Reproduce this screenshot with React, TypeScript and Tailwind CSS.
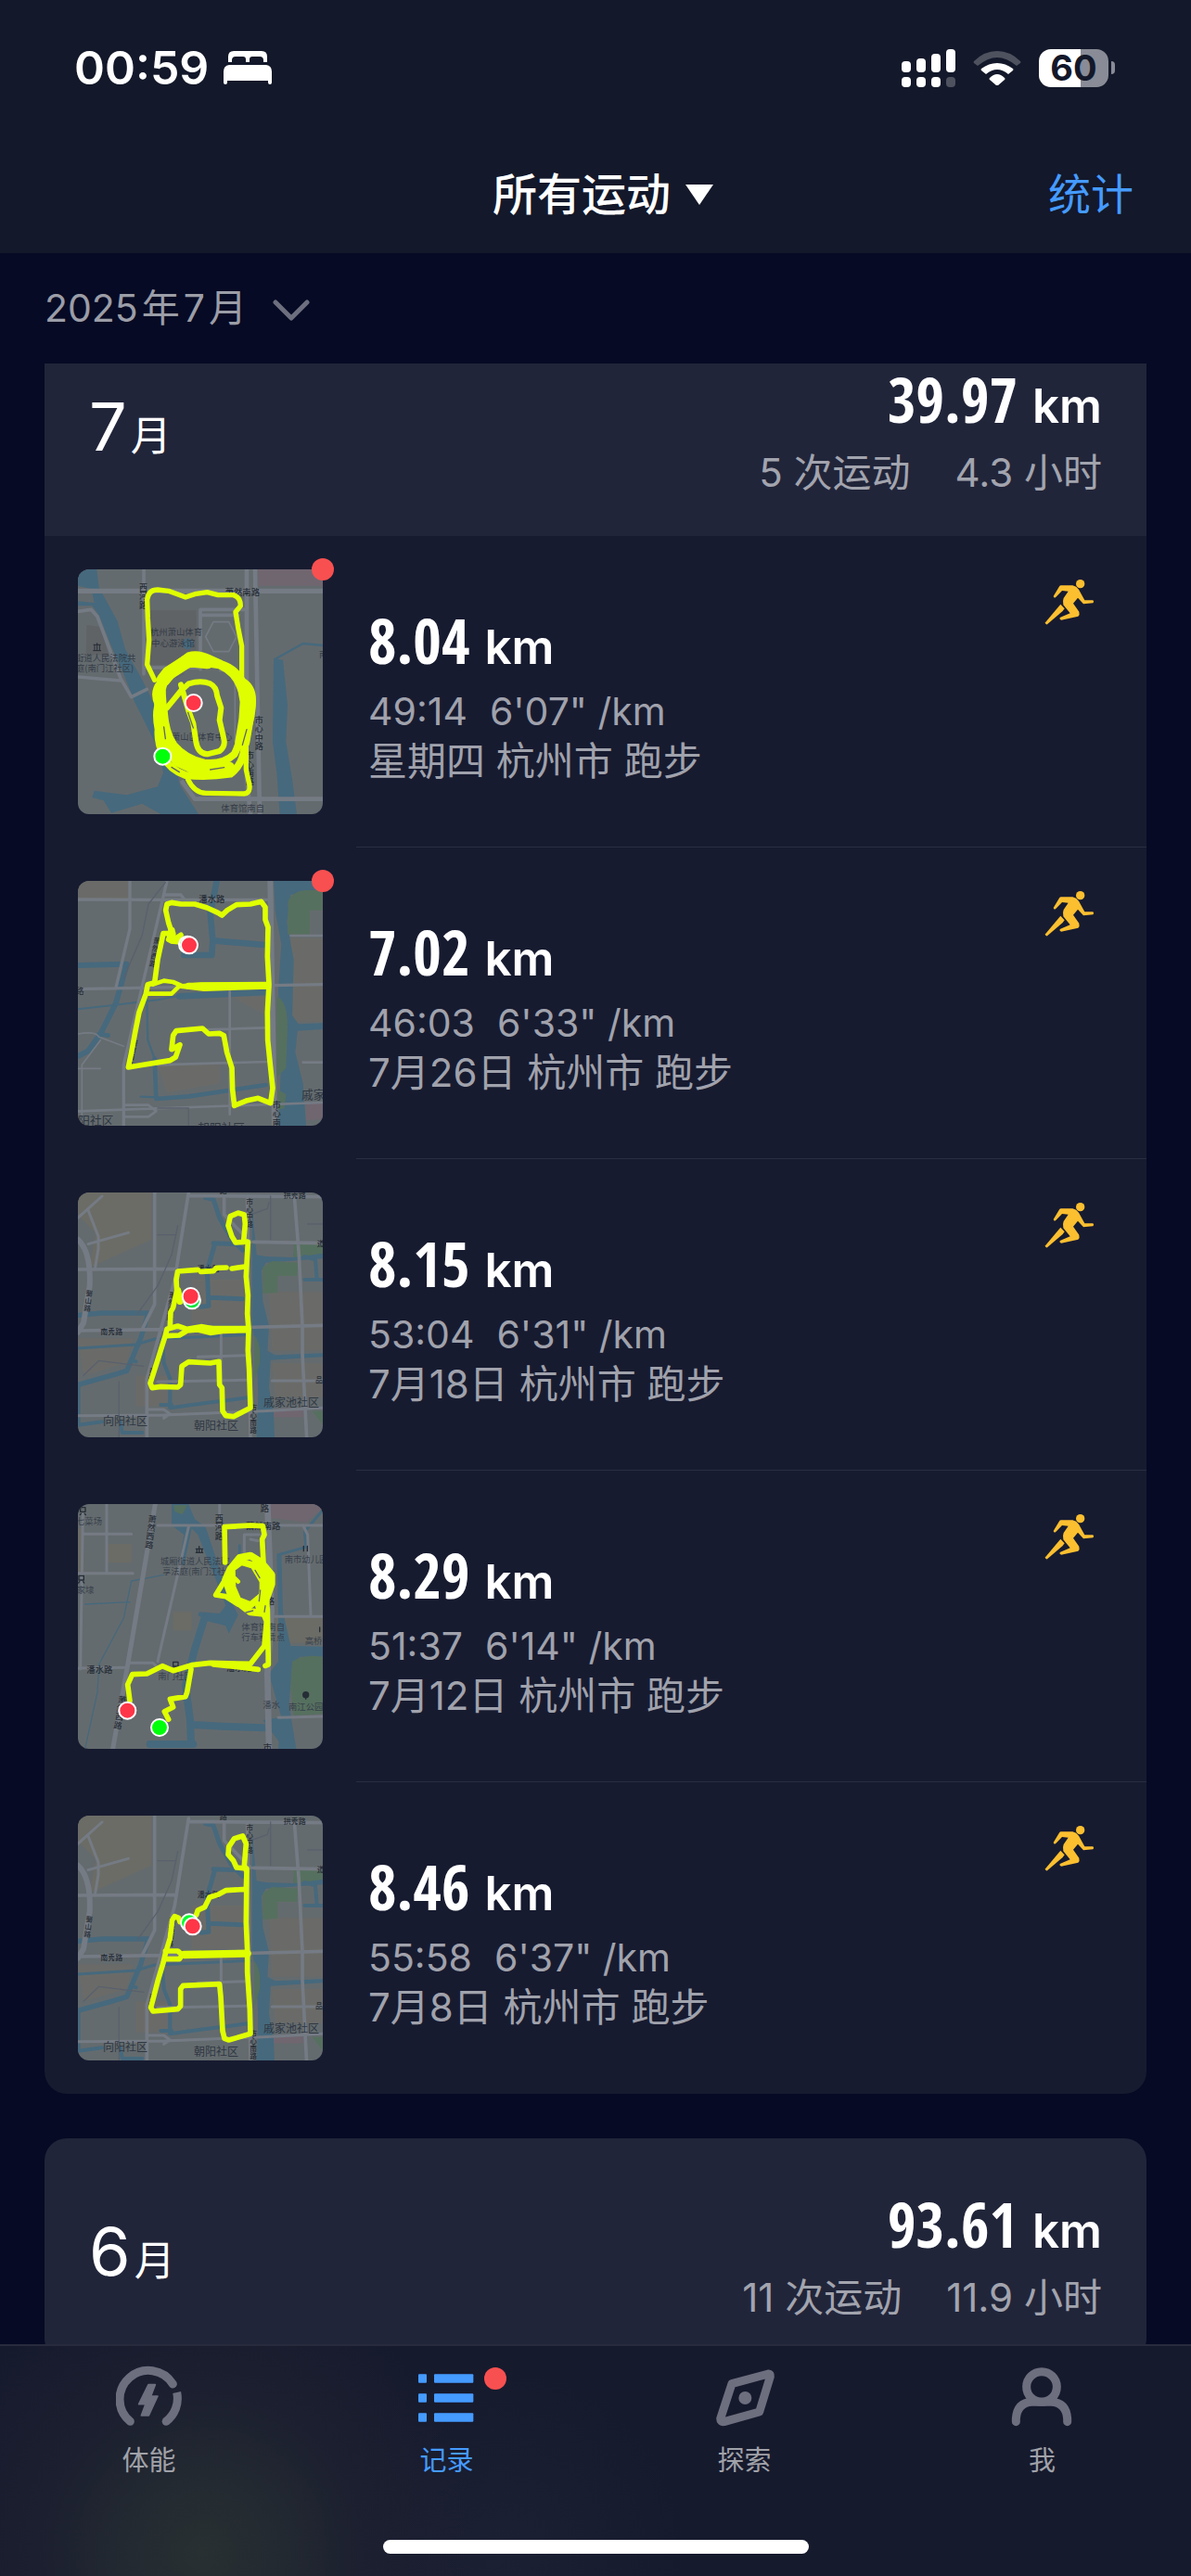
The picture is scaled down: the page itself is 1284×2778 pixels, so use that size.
import type { ReactNode } from "react";

const CJK = "font-['Inter','Noto_Sans_CJK_SC',sans-serif]";

/* ---------- map thumbnails ---------- */

const water = "#46697d";
const road = "#757b84";
const darkRoad = "#59616d";
const route = "#dfff00";
const green = "#56705f";
const tan = "#6b6c66";

function Pin({ x, y, color }: { x: number; y: number; color: string }) {
  return <circle cx={x} cy={y} r="27" fill={color} stroke="#fff" strokeWidth="6" />;
}

function MapFrame({ top, label, children }: { top: number; label: string; children: ReactNode }) {
  return (
    <svg
      viewBox={`42 ${top} 792 792`}
      role="img"
      aria-label={label}
      className="block size-[264px] rounded-xl bg-[#646b6e] font-['Noto_Sans_CJK_SC',sans-serif]"
      fill="none"
      strokeLinecap="round"
      strokeLinejoin="round"
    >
      {children}
    </svg>
  );
}

function VText({ x, y, children, rotate = 0, size = 27 }: { x: number; y: number; children: string; rotate?: number; size?: number }) {
  return (
    <g transform={`rotate(${rotate} ${x} ${y})`} fill="#262d36" stroke="none" fontSize={size} fontWeight="500">
      {children.split("").map((c, i) => (
        <text key={i} x={x} y={y + i * (size + 1)}>
          {c}
        </text>
      ))}
    </g>
  );
}

function StadiumMap() {
  return (
    <MapFrame top={42} label="跑步路线">
      <path d="M625 42H834V95H625Z" fill="#706670" />
      <path d="M70 222L115 228L142 320L68 318ZM275 175H425V350H275Z" fill="#606366" />
      <path d="M42 42H103L110 100L170 210L195 300L250 400L330 560L372 740L432 834H310L250 800L150 830L125 790L88 780L95 758L200 772L300 745L318 700L300 620L225 470L190 380L150 290L110 190L88 160H42V145L95 150L85 105L42 95Z" fill={water} />
      <path d="M675 330L705 335L720 480L715 600L735 720L750 834H695L685 700L672 600Z" fill={water} />
      <path d="M680 332L770 282L834 288" stroke={water} strokeWidth="7" />
      <circle cx="398" cy="283" r="18" fill={water} />
      <g stroke={road} strokeWidth="11">
        <path d="M42 112H834" strokeWidth="16" />
        <path d="M255 42V380M255 360H430M438 365V172H580M440 190H560M42 178L85 172L105 195L180 395L215 455L265 430M42 390L180 402" />
        <path d="M588 42V720L600 834M615 42L630 834M380 730L420 785H834" strokeWidth="14" />
        <path d="M480 212H530L555 260L530 308H480L455 260ZM500 370L550 372V600" strokeWidth="5" />
      </g>
      <g fill="#343c47" fontSize="28" stroke="none">
        <text x="276" y="256">杭州萧山体育</text>
        <text x="280" y="290">中心游泳馆</text>
        <text x="33" y="340">街道人民法院共</text>
        <text x="36" y="372">庭(南门江社区)</text>
        <text x="345" y="594">萧山区体育中心</text>
        <text x="505" y="826">体育馆南自</text>
        <text x="822" y="328">南</text>
      </g>
      <text x="518" y="127" fill="#262d36" fontSize="28" fontWeight="500">萧然南路</text>
      <path d="M93 286h22M96 286v18M104 284v20M112 286v18M92 305h24M104 281v4" stroke="#262d36" strokeWidth="3" />
      <VText x={240} y={111}>西河路</VText>
      <VText x={614} y={540}>市心中路</VText>
      <VText x={585} y={655}>市心南路</VText>
      <g stroke={route} strokeWidth="16">
        <path d="M290 400L266 350L272 270L268 200L266 140Q270 108 300 108L335 112L390 132L420 122L460 116L495 125L545 125Q568 132 568 160L552 180L560 230L572 290L572 400" />
        <path d="M398 722Q420 768 460 766L580 768Q602 765 596 735L586 690V620" />
        <path d="M330 490L375 435L400 412Q440 400 470 412Q490 422 492 450L505 490L500 530L514 590Q520 615 500 630L460 640Q430 638 424 600L415 540L400 500L375 415" strokeWidth="18" />
        <path d="M308 410Q315 375 350 360L400 322Q430 312 470 332L505 348Q550 362 575 405Q608 425 606 470Q606 510 594 545L580 625Q570 680 535 704Q460 716 390 708Q340 690 320 650Q298 600 302 560Q292 510 302 480Q284 440 308 410Z" strokeWidth="24" />
        <path d="M320 410L350 378L395 350Q440 340 500 352Q550 375 566 420Q590 470 575 530Q570 600 548 640Q510 675 450 668Q390 655 352 610Q325 570 320 500Q305 450 320 410Z" strokeWidth="24" />
        <path d="M318 400L335 378L400 336L460 342" strokeWidth="44" />
        <path d="M583 430L590 470L586 530L574 600" strokeWidth="48" />
        <path d="M306 440L312 520L325 600L365 660L430 690L530 684" strokeWidth="40" />
      </g>
      <path d="M360 392L385 380M345 682L370 698M470 690L515 683M588 560L574 610M320 552L325 590" stroke="#60656a" strokeWidth="4" />
      <path d="M398 505L415 555" stroke="#646b6e" strokeWidth="4" />
      <Pin x={416} y={474} color="#ff3548" />
      <Pin x={316} y={647} color="#00ff0a" />
    </MapFrame>
  );
}

function RiverMap() {
  return (
    <MapFrame top={45} label="跑步路线">
      <path d="M42 45H205V105H42ZM730 230H834V500H740ZM300 640H500V700L330 730ZM540 420H650V480Z" fill="#6a6b68" />
      <path d="M675 45H834V75L730 90L718 180L740 300L735 480L755 508L834 505V525L752 530L745 600L770 700L780 837H690L695 740L700 600L690 400L700 250L680 140Z" fill={water} />
      <path d="M722 110Q735 78 780 75H834V140H792V218H720Z" fill={green} />
      <path d="M685 420Q720 430 720 520L715 650L685 680ZM688 720L715 735L710 780L690 785Z" fill={green} />
      <path d="M780 765H834V815L780 820Z" fill="#706670" />
      <g stroke={water} strokeWidth="16">
        <path d="M42 318L200 314L165 440L115 540L75 595L42 612" strokeWidth="18" />
        <path d="M490 50L470 150L478 235L475 285H385M480 238L645 252" strokeWidth="20" />
        <path d="M370 418L650 405" strokeWidth="20" />
        <path d="M42 460L150 448L300 430L380 415" strokeWidth="6" />
        <path d="M110 540L140 545M290 620L295 750L400 742L650 705" strokeWidth="14" />
        <path d="M245 743L300 745M265 430L268 560L290 620" strokeWidth="7" />
      </g>
      <g stroke={road} strokeWidth="10">
        <path d="M210 45V200L165 390M42 105L310 106M318 106H655M325 90H375L390 110M42 395L834 380M330 45L190 640V837" />
        <path d="M664 45L670 400L678 837" strokeWidth="18" />
        <path d="M730 222H834M533 400V800M300 640L660 630M430 527L650 520M42 790L834 762M190 770H270L295 790L270 808H195M770 632H834" strokeWidth="8" />
        <path d="M42 540Q100 530 110 550L190 580M115 560L55 640V837M42 652H115" strokeWidth="5" />
      </g>
      <path d="M325 50L270 120L250 220L190 360M300 780H400V837" stroke={darkRoad} strokeWidth="4" />
      <text x="433" y="115" fill="#262d36" fontSize="28" fontWeight="500">潘水路</text>
      <g fill="#2f3742" fontSize="38">
        <text x="765" y="749">戚家</text>
        <text x="43" y="833">阳社区</text>
        <text x="430" y="857">朝阳社区</text>
      </g>
      <text x="34" y="410" fill="#262d36" fontSize="28">路</text>
      <VText x={284} y={246} rotate={9} size={24}>萧然西路</VText>
      <VText x={212} y={575} rotate={12} size={22}>萧然西路</VText>
      <VText x={671} y={780}>市心南路</VText>
      <g stroke={route} strokeWidth="17">
        <path d="M375 220L345 240L335 235L345 210L335 180L326 140L330 120L345 115L375 120L420 120L460 132L495 148L508 156L525 140L555 122L600 120L635 112L648 130L648 170L657 195L655 290L660 380L655 470L656 560L664 640L672 715L665 764L625 748L590 755L548 772L542 720L540 650L524 600L514 545L500 538L465 540L445 522L360 530L350 545L345 590L372 575L358 615L340 626L240 642L205 648L215 600L228 530L240 470L262 410L268 380L290 374L300 300L318 215L350 215" />
        <path d="M265 410H345L370 385L450 395L660 388M285 380L320 368L350 372L380 385L440 380L655 378" strokeWidth="14" />
        <path d="M400 385L655 384" strokeWidth="22" />
        <path d="M345 205L350 238L375 240" strokeWidth="22" />
      </g>
      <Pin x={396} y={251} color="#00ff0a" />
      <Pin x={402} y={253} color="#ff3548" />
    </MapFrame>
  );
}

function DistrictBase({ dy }: { dy: number }) {
  return (
    <g transform={`translate(0 ${dy})`}>
      <path d="M42 33H280V200L80 290L100 180L42 120Z" fill={tan} />
      <path d="M42 520H220L200 600L60 640ZM410 330H580V470H410ZM670 600H834V710H680ZM230 640H330V740H230ZM660 370H834V560H670Z" fill="#6a6b68" />
      <path d="M605 90L620 250L650 255L740 258V240L834 245V262L650 275L636 300L640 400L660 480L655 560L680 574L834 568V580L665 590L660 680L675 760L678 842H620L625 700L620 560L605 480Z" fill={water} />
      <path d="M640 290L670 270L755 275L750 318H688V372L640 375ZM740 215H834V245L740 258ZM612 510Q635 530 630 600L612 660ZM800 755H834V800Z" fill={green} />
      <path d="M675 750H770V775H675Z" fill="#706670" />
      <g stroke={water} strokeWidth="16">
        <path d="M42 445L120 438L270 438L245 520L200 625L150 640L42 670V790" />
        <path d="M455 65L480 70L500 130L540 200L575 235M480 212L560 215M485 215L460 300L465 415L440 418M465 388L575 392" strokeWidth="15" />
        <path d="M42 552L230 540L290 522L600 508" strokeWidth="9" />
        <path d="M315 530L320 600L340 650V745L450 730L590 712M310 735H345M215 590L230 595" strokeWidth="12" />
        <path d="M180 790L185 825H250M42 800L120 790M775 255L810 265L815 330M775 330H834" strokeWidth="12" />
      </g>
      <g stroke={road} strokeWidth="11">
        <path d="M42 297L360 295M42 495L360 490L834 478M290 33V410L250 490M400 48L355 330L265 650V842M400 58L834 62" />
        <path d="M42 200Q85 240 80 350L60 470L42 500" strokeWidth="18" />
        <path d="M42 130L120 60M75 105L108 190V230L98 290M75 215L205 178" strokeWidth="9" />
        <path d="M515 60V120L600 208M590 60L600 842M610 208L834 212M742 60L757 250L768 480V570L782 842" />
        <path d="M505 500V740M430 580L590 575M300 660L590 655M670 657H834M42 770L320 768L640 755L834 745M270 750H320L340 765L320 778" strokeWidth="9" />
      </g>
      <path d="M365 155L345 250L300 350L235 440M300 185H355M60 640L110 592L255 610M175 660V842M600 120L655 100L660 80M785 150H834M665 60V200" stroke={darkRoad} strokeWidth="4" />
      <g fill="#262d36" fontSize="24" fontWeight="500">
        <text x="707" y="67">拱秀路</text>
        <text x="428" y="302">潘水路</text>
        <text x="115" y="506">南秀路</text>
        <text x="500" y="52">路</text>
        <text x="815" y="223">道</text>
        <text x="810" y="663">品</text>
      </g>
      <g fill="#2f3742" fontSize="36">
        <text x="642" y="741">戚家池社区</text>
        <text x="123" y="800">向阳社区</text>
        <text x="417" y="815">朝阳社区</text>
      </g>
      <VText x={66} y={382} rotate={7} size={23}>蜀山路</VText>
      <VText x={335} y={388} rotate={6} size={23}>萧然西路</VText>
      <VText x={272} y={630} rotate={8} size={20}>西路</VText>
      <VText x={586} y={86} size={23}>市心中路</VText>
      <VText x={598} y={752} size={23}>市心南路</VText>
    </g>
  );
}

function LoopMap() {
  return (
    <MapFrame top={48} label="跑步路线">
      <DistrictBase dy={0} />
      <g stroke={route} strokeWidth="17">
        <path d="M540 294L582 288M430 298L365 303L360 330L362 365L350 420L342 435L340 480M440 304L480 302L490 292L522 291" />
        <path d="M578 208L552 210L540 190L528 155L535 125L560 114L580 120L583 150L578 205L592 208L588 280L586 320L592 380L590 440L594 490L592 560L596 620L600 745L545 773L520 770L510 755L508 680L500 670L498 595L470 600L400 596L378 610L374 670L365 678L310 676L282 680L276 665L300 590L325 510L330 490L365 480L395 490L440 482L500 492L590 488" />
        <path d="M328 512L370 510L395 495L430 492L470 502L510 496L590 494" />
        <path d="M365 365L372 400M420 490L590 490" strokeWidth="22" />
      </g>
      <Pin x={411} y={397} color="#00e63a" />
      <Pin x={407} y={384} color="#ff3548" />
    </MapFrame>
  );
}

function TownMap() {
  return (
    <MapFrame top={51} label="跑步路线">
      <path d="M665 51H834V65L780 110L665 95Z" fill="#706670" />
      <path d="M140 180H215V240H140ZM350 400H410V460H350ZM680 420H834V500H680ZM42 130H60V270H42Z" fill={tan} />
      <path d="M345 51H400L420 100L455 125L490 230L510 290L545 380L560 410L530 470L520 445L460 430L430 410L435 400L500 405L520 380L490 300L450 200L430 150L410 130L385 250L370 240L385 150L345 120Z" fill={water} />
      <path d="M352 55H395L380 85L355 75Z" fill={green} />
      <path d="M685 215L700 215L705 400L730 510L834 512V545L760 545L735 570L725 700L748 843H690L700 740L660 600L690 560V400Z" fill={water} />
      <path d="M640 750L700 740V830Z" fill={water} />
      <path d="M735 560Q780 535 834 545V730L740 735L730 640Z" fill={green} />
      <g stroke={water}>
        <path d="M450 425L420 520L390 640L405 750L408 828M415 765L510 770L645 775M275 828H415" strokeWidth="24" />
        <path d="M830 75L775 140L780 190L690 215M565 185V240" strokeWidth="9" />
        <path d="M65 375L210 368M320 280L215 300L190 420L110 570L105 660L65 843" strokeWidth="4" />
      </g>
      <g stroke={road} strokeWidth="9">
        <path d="M292 51L205 560L155 843" strokeWidth="15" />
        <path d="M135 51V275M62 148H215M42 275H220M58 85L50 585M300 120H834M400 125L300 560M500 51V100M42 582L200 580M210 565H285L300 580L270 600M680 415H834M690 742L834 738" />
        <path d="M655 51L668 400L655 600L660 843" strokeWidth="20" />
        <path d="M770 120L785 150L795 410M580 220V150H640M600 165L625 170" strokeWidth="9" />
      </g>
      <g fill="#38414c" fontSize="28">
        <text x="36" y="118">七菜场</text>
        <text x="38" y="338">家埭</text>
        <text x="308" y="246">城厢街道人民法院</text>
        <text x="315" y="278">享法庭(南门江社</text>
        <text x="710" y="239">南市幼儿园</text>
        <text x="571" y="458">体育馆南自</text>
        <text x="571" y="492">行车租赁点</text>
        <text x="776" y="504">高桥</text>
        <text x="301" y="618">南门社区</text>
        <text x="640" y="711">潘水</text>
        <text x="723" y="718">南江公园</text>
      </g>
      <g fill="#262d36" fontSize="28" fontWeight="500">
        <text x="70" y="596">潘水路</text>
        <text x="522" y="592">潘水路</text>
        <text x="585" y="132">萧然南路</text>
        <text x="632" y="76">路</text>
        <text x="650" y="374">路</text>
        <text x="641" y="850">市</text>
      </g>
      <VText x={268} y={108} rotate={7} size={27}>萧然西路</VText>
      <VText x={170} y={692} rotate={9} size={27}>萧然西路</VText>
      <VText x={485} y={108} size={27}>西河路</VText>
      <g stroke="#262d36" strokeWidth="4">
        <path d="M50 62h16v14H50zM52 82l-3 4M64 82l3 4M45 283h16v14H45zM47 302l-3 4M59 302l3 4M350 562h16v14h-16zM352 581l-3 4M364 581l3 4" />
        <path d="M424 196h22M427 197v10M434 197v10M443 197v10M424 208h22M434 188v5M772 187v16M784 187v16M824 450v14M779 668v14" />
      </g>
      <circle cx="779" cy="668" r="11" fill="#262d36" />
      <g stroke={route} strokeWidth="17">
        <path d="M518 240L516 125L600 120L640 122L645 150L638 165L642 240M525 285L488 345L520 350L560 375M210 688L203 635L218 602L265 600L315 575L350 590L410 572L470 565L600 568L645 510L652 430L640 400M480 570L560 578L625 586M655 390L658 570L648 574M408 585L395 660L390 674L340 682L350 708L322 722L335 748" />
        <path d="M535 262L565 225L600 218L635 240L668 280L668 310L650 360L650 405L600 400L568 375L535 340L520 295Z" strokeWidth="24" />
        <path d="M540 260L570 238L610 250L640 300L640 345L600 378L560 362L542 320Z" strokeWidth="22" />
        <path d="M620 245L655 310L632 380" strokeWidth="34" />
        <path d="M548 290L560 302" strokeWidth="14" />
      </g>
      <path d="M615 265L630 290M632 330L628 365M585 402L608 396M648 380L645 400" stroke="#646b6e" strokeWidth="4" />
      <Pin x={202} y={719} color="#ff3548" />
      <Pin x={306} y={774} color="#00ff0a" />
    </MapFrame>
  );
}

function TriangleMap() {
  return (
    <MapFrame top={54} label="跑步路线">
      <DistrictBase dy={15} />
      <g stroke={route} strokeWidth="17">
        <path d="M372 398L368 385L355 380L347 392L340 450L325 500L318 530L300 590L278 675L285 687L365 680L374 670V615L382 604L500 599L504 640L510 750L516 775L530 780L600 760L598 680L590 560V490L586 400L588 225L555 222L545 200L528 180L530 155L548 128L575 120L586 145L580 215L588 235L586 292L520 296L495 310L468 318L452 350L430 360L425 375" />
        <path d="M325 492H365L380 505L370 518H325M380 505L590 500" />
        <path d="M385 504L590 500" strokeWidth="25" />
      </g>
      <Pin x={402} y={400} color="#00ff2a" />
      <Pin x={413} y={412} color="#ff3548" />
    </MapFrame>
  );
}

/* ---------- icons ---------- */

function RunnerIcon() {
  return (
    <svg viewBox="46 40 162 156" className="h-[52px] w-[54px]" fill="#fbbf30" role="img" aria-label="跑步">
      <circle cx="162" cy="60" r="14" />
      <path d="M99 65H137Q150 68 157 78L176 113H203Q208 118 203 122L172 125L154 105L139 123L158 150Q161 159 155 165L100 177Q93 174 96 169L129 155L107 128Q104 116 108 106L123 84L103 82L82 104Q76 106 75 100L93 70Q95 66 99 65Z" />
      <path d="M98 126L111 140L105 148L55 191Q48 192 49 185Z" />
    </svg>
  );
}

function BedIcon() {
  return (
    <svg viewBox="0 0 52 37" className="h-[37px] w-[52px]" fill="#fff" aria-hidden="true">
      <path d="M5 12V6Q5 0 11 0H41Q47 0 47 6V12H43V10Q43 6 39 6H31Q28 6 28 9V12H24V9Q24 6 21 6H13Q9 6 9 10V12Z" />
      <path d="M6 15H46Q52 16 52 22V34Q52 36 50 36T48 34V32H4V34Q4 36 2 36T0 34V22Q0 16 6 15Z" />
    </svg>
  );
}

function SignalIcon() {
  return (
    <svg viewBox="0 0 58 41" className="h-[41px] w-[58px]" fill="#fff" aria-hidden="true">
      <rect x="0" y="13" width="10" height="12" rx="4" />
      <rect x="16" y="10" width="10" height="15" rx="4" />
      <rect x="32" y="5" width="10" height="20" rx="4" />
      <rect x="48" y="0" width="10" height="25" rx="4" />
      <rect x="0" y="30" width="10" height="11" rx="4" />
      <rect x="16" y="30" width="10" height="11" rx="4" />
      <rect x="32" y="30" width="10" height="11" rx="4" />
      <rect x="48" y="30" width="10" height="11" rx="4" opacity=".25" />
    </svg>
  );
}

function WifiIcon() {
  return (
    <svg viewBox="0 0 52 37" className="h-[37px] w-[52px]" fill="#fff" aria-hidden="true">
      <path d="M1 11Q12 0 26 0T51 11Q52 12 51 13L47 16Q36 7 26 7T5 16L1 13Q0 12 1 11Z" opacity=".25" />
      <path d="M9 19Q17 13 26 13T43 19Q44 20 43 21L38 25Q32 20 26 20T14 25L9 21Q8 20 9 19Z" />
      <path d="M18 29Q22 25 26 25T34 29Q35 30 34 31L27 37Q26 38 25 37L18 31Q17 30 18 29Z" />
    </svg>
  );
}

function FitnessIcon() {
  return (
    <svg viewBox="74 54 216 216" className="size-[72px]" aria-hidden="true">
      <path d="M120 244A93 93 0 1 1 258 123" stroke="#6d6f7f" strokeWidth="27" fill="none" strokeLinecap="round" />
      <path d="M271 150A93 93 0 0 1 236 244" stroke="#6d6f7f" strokeWidth="27" fill="none" />
      <circle cx="236" cy="244" r="13" fill="#6d6f7f" />
      <path d="M179 125H201L187 162H209L180 225H156L170 188H148Z" fill="#6d6f7f" stroke="#6d6f7f" strokeWidth="5" strokeLinejoin="round" />
    </svg>
  );
}

function ListIcon() {
  return (
    <svg viewBox="1038 54 216 216" className="size-[72px]" fill="#459bff" aria-hidden="true">
      {[91, 154, 217].map((y) => (
        <g key={y}>
          <rect x="1053" y={y} width="27" height="28" rx="3" />
          <rect x="1104" y={y} width="127" height="28" rx="3" />
        </g>
      ))}
    </svg>
  );
}

function ExploreIcon() {
  return (
    <svg viewBox="51 39 216 216" className="size-[72px]" aria-hidden="true">
      <path d="M117 107L235 75Q242 74 241 84L206 198L92 230Q80 232 80 220Z" stroke="#6d6f7f" strokeWidth="27" fill="none" strokeLinejoin="round" />
      <circle cx="160" cy="153" r="21" fill="#6d6f7f" />
    </svg>
  );
}

function ProfileIcon() {
  return (
    <svg viewBox="1014 39 216 216" className="size-[72px]" stroke="#6d6f7f" strokeWidth="27" fill="none" strokeLinecap="round" aria-hidden="true">
      <circle cx="1119" cy="117" r="49" />
      <path d="M1036 230V220Q1040 168 1088 166H1150Q1198 168 1202 220V230" />
    </svg>
  );
}

/* ---------- content ---------- */

const runs = [
  { distance: "8.04", time: "49:14", pace: "6'07\"", note: "星期四 杭州市 跑步", unread: true, Map: StadiumMap },
  { distance: "7.02", time: "46:03", pace: "6'33\"", note: "7月26日 杭州市 跑步", unread: true, Map: RiverMap },
  { distance: "8.15", time: "53:04", pace: "6'31\"", note: "7月18日 杭州市 跑步", unread: false, Map: LoopMap },
  { distance: "8.29", time: "51:37", pace: "6'14\"", note: "7月12日 杭州市 跑步", unread: false, Map: TownMap },
  { distance: "8.46", time: "55:58", pace: "6'37\"", note: "7月8日 杭州市 跑步", unread: false, Map: TriangleMap },
];

function Distance({ value }: { value: string }) {
  return (
    <p className="flex items-baseline gap-4 leading-[72px] text-white">
      <span className="font-['Open_Sans_Condensed','Roboto_Condensed',sans-serif] text-[66px] font-bold">{value}</span>
      <span className="text-[51px] font-semibold">km</span>
    </p>
  );
}

function MonthHeader({ month, distance, count, hours }: { month: string; distance: string; count: string; hours: string }) {
  return (
    <header className="flex h-[240px] items-start justify-between bg-[#21253a] px-12">
      <h2 className="flex items-baseline gap-1 pt-[86px] leading-[72px] text-white">
        <span className="text-[72px]">{month}</span>
        <span className="text-[44px]">月</span>
      </h2>
      <div className="flex flex-col items-end pt-14">
        <Distance value={distance} />
        <p className="flex gap-12 text-[42px] leading-[72px] text-[#a2a4ae]">
          <span>{count} 次运动</span>
          <span>{hours} 小时</span>
        </p>
      </div>
    </header>
  );
}

const tabs = [
  { label: "体能", Icon: FitnessIcon, active: false },
  { label: "记录", Icon: ListIcon, active: true },
  { label: "探索", Icon: ExploreIcon, active: false },
  { label: "我", Icon: ProfileIcon, active: false },
];

export default function App() {
  return (
    <div className={`flex h-screen flex-col overflow-hidden bg-[#060a24] ${CJK}`}>
      <div className="shrink-0 bg-[#13182a]">
        <div className="flex h-[146px] items-center justify-between pr-[82px] pl-20">
          <div className="flex items-center gap-4">
            <span className="text-[50px] font-semibold text-white">00:59</span>
            <BedIcon />
          </div>
          <div className="flex items-center gap-[19px]">
            <SignalIcon />
            <WifiIcon />
            <div className="flex items-center gap-[3px]">
              <span className="flex h-[41px] w-[75px] items-center justify-center rounded-[13px] bg-linear-to-r from-white from-60% to-[#898c96] to-60% text-[38px] font-bold text-[#13182a]">
                60
              </span>
              <span className="h-[14px] w-1 rounded-r-full bg-[#898c96]" />
            </div>
          </div>
        </div>
        <div className="grid h-[127px] grid-cols-3 items-center px-[62px] text-[46px]">
          <button type="button" className="col-start-2 flex items-center justify-center gap-4 pl-4 text-[48px] font-medium text-white">
            <span className="whitespace-nowrap">所有运动</span>
            <svg viewBox="0 0 30 22" className="h-[22px] w-[30px]" fill="#fff" aria-hidden="true">
              <path d="M0 0H30L15 22Z" />
            </svg>
          </button>
          <a href="#stats" className="justify-self-end text-[#459bff]">
            统计
          </a>
        </div>
      </div>

      <button type="button" className="flex h-[119px] shrink-0 items-center gap-7 self-start pl-12 text-[41px] text-[#9b9da7]">
        <span className="flex gap-1">
          <span>2025</span>
          <span>年</span>
          <span>7</span>
          <span>月</span>
        </span>
        <svg viewBox="0 0 40 24" className="mt-1 h-6 w-10" fill="none" stroke="#6d6f7f" strokeWidth="5" strokeLinecap="round" strokeLinejoin="round" aria-hidden="true">
          <path d="M3 3L20 20L37 3" />
        </svg>
      </button>

      <main className="min-h-0 flex-1 overflow-hidden px-12">
        <section className="-mt-[54px] overflow-hidden rounded-3xl bg-[#171b30]">
          <MonthHeader month="7" distance="39.97" count="5" hours="4.3" />
          <ul>
            {runs.map(({ distance, time, pace, note, unread, Map }, i) => (
              <li key={distance} className="flex h-[336px] pl-9">
                <div className="relative mt-9 mr-9 size-[264px] shrink-0">
                  <Map />
                  {unread && <span className="absolute -top-3 -right-3 size-6 rounded-full bg-[#f85050]" />}
                </div>
                <div className={`flex flex-1 items-start justify-between border-b pr-14 pl-[13px] ${i < runs.length - 1 ? "border-[#2a2e41]" : "border-transparent"}`}>
                  <div className="pt-[76px]">
                    <Distance value={distance} />
                    <p className="flex gap-6 pt-[6px] text-[41px] leading-[54px] text-[#a0a2ac]">
                      <span>{time}</span>
                      <span>{pace} /km</span>
                    </p>
                    <p className="text-[42px] leading-[54px] text-[#a0a2ac]">{note}</p>
                  </div>
                  <div className="pt-[45px]">
                    <RunnerIcon />
                  </div>
                </div>
              </li>
            ))}
          </ul>
        </section>
        <section className="mt-12 overflow-hidden rounded-3xl bg-[#171b30]">
          <MonthHeader month="6" distance="93.61" count="11" hours="11.9" />
        </section>
      </main>

      <nav className="h-[250px] shrink-0 border-t-2 border-[#272b3c] bg-[#161a2d] bg-[radial-gradient(circle_at_17%_90%,#283032_0%,#232931_8%,#1c2030e0_16%,transparent_28%),radial-gradient(circle_at_42%_90%,#1c2033_0%,transparent_26%)]">
        <div className="grid grid-cols-4 pt-[18px]">
          {tabs.map(({ label, Icon, active }) => (
            <button key={label} type="button" aria-current={active ? "page" : undefined} className="flex flex-col items-center">
              <span className="relative">
                <Icon />
                {active && <span className="absolute top-[5px] left-[76px] size-6 rounded-full bg-[#f85050]" />}
              </span>
              <span className={`mt-4 text-[29px] leading-9 ${active ? "text-[#459bff]" : "text-[#a0a2a9]"}`}>{label}</span>
            </button>
          ))}
        </div>
        <div className="mx-auto mt-[67px] h-[15px] w-[459px] rounded-full bg-white" />
      </nav>
    </div>
  );
}
